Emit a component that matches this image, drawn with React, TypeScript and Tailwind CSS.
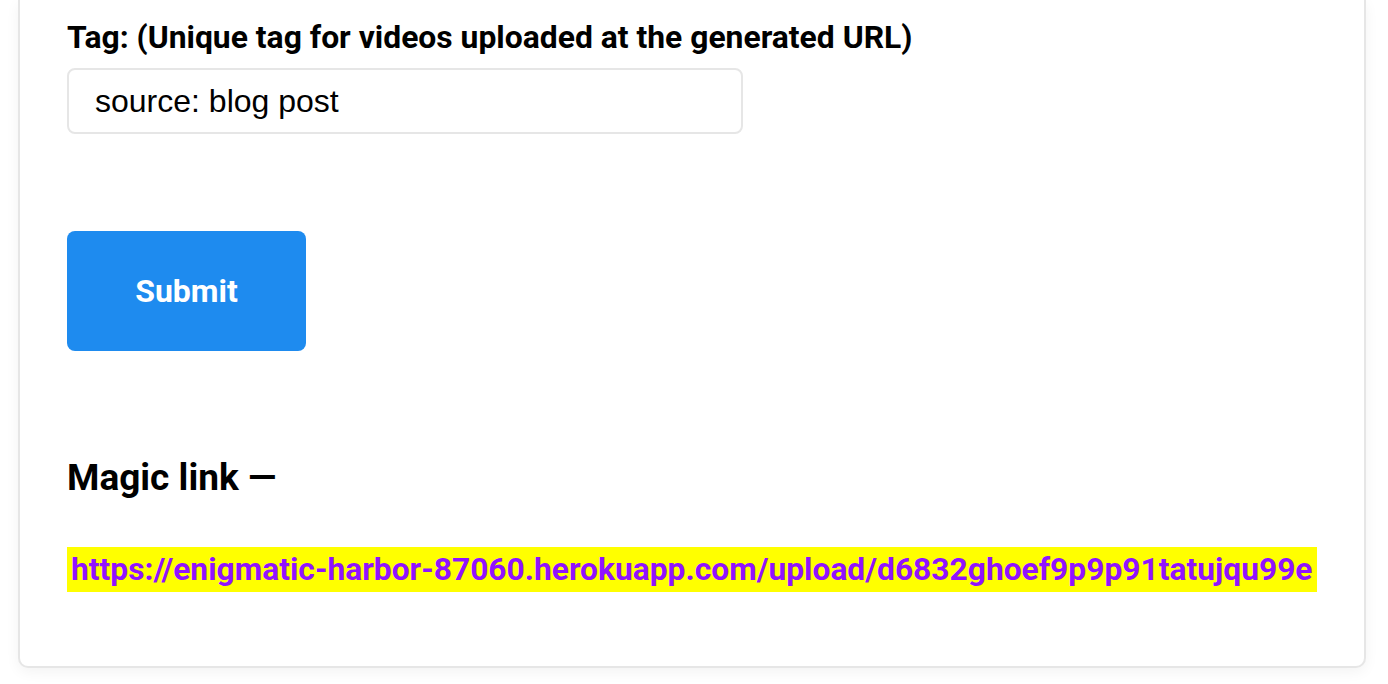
const App = () => {
  return (
    <div className="min-h-screen w-full bg-white" style={{ fontFamily: "Roboto, 'Liberation Sans', sans-serif" }}>
      <section className="ml-[18px] mr-[22px] rounded-b-[10px] border-x-2 border-b-2 border-[#e6e6e6] bg-white px-[47px] pt-[19px] pb-[74px] shadow-[0_4px_14px_rgba(0,0,0,0.05)]">
        {/* tag field */}
        <label className="block text-[31.85px] font-bold leading-[36px] text-black">
          Tag: (Unique tag for videos uploaded at the generated URL)
        </label>
        <input
          type="text"
          defaultValue="source: blog post"
          className="mt-[13px] block h-[66px] w-[676px] rounded-[8px] border-2 border-[#e6e6e6] px-[26px] text-[32px] text-black outline-none"
          style={{ fontFamily: "'Liberation Sans', Arial, sans-serif" }}
        />

        {/* button */}
        <button className="mt-[97px] flex h-[120px] w-[239px] items-center justify-center rounded-[8px] bg-[#1e8bef] text-[32px] font-bold text-white">
          Submit
        </button>

        <h2 className="mt-[105px] text-[37px] font-bold leading-[44px] text-black">Magic link —</h2>

        <div className="mt-[47px] whitespace-nowrap">
          <span className="inline-block bg-[#ffff00] px-[4px] text-[31.75px] font-bold leading-[45px] text-[#9013fe]">
            https://enigmatic-harbor-87060.herokuapp.com/upload/d6832ghoef9p9p91tatujqu99e
          </span>
        </div>
      </section>
    </div>
  );
};

export default App;
